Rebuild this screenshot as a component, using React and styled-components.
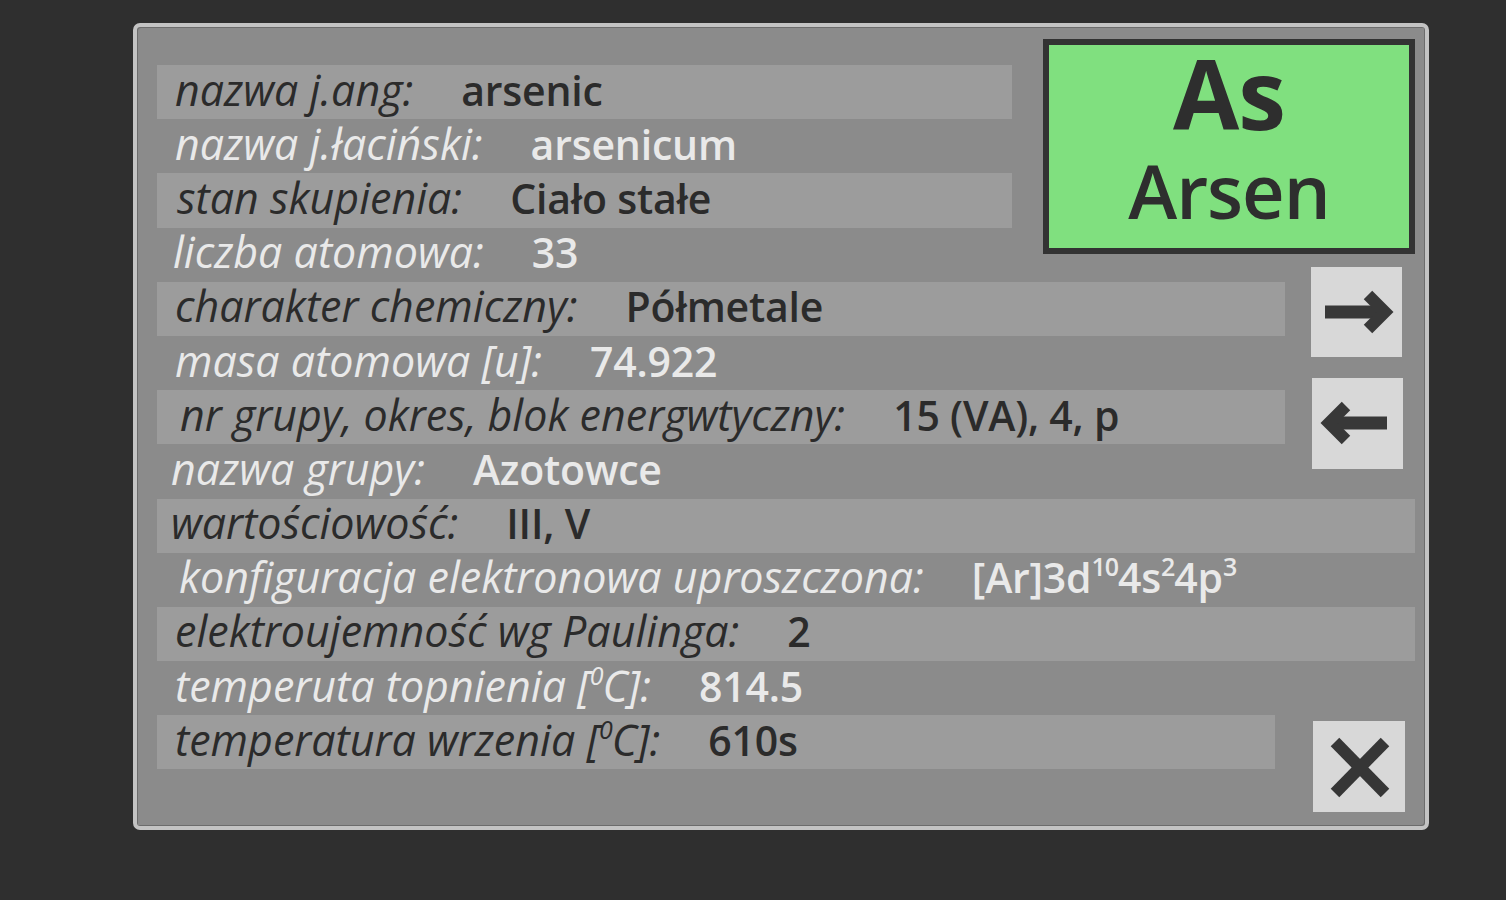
import React from "react";
import styled, { createGlobalStyle } from "styled-components";

const GlobalStyle = createGlobalStyle`
  html, body {
    margin: 0;
    padding: 0;
    background: #2f2f2f;
  }
  body {
    font-family: "Open Sans", "Noto Sans", sans-serif;
  }
`;

const Page = styled.div`
  min-height: 900px;
  padding: 23px 0 0 133px;
  box-sizing: border-box;
`;

const Panel = styled.div`
  box-sizing: border-box;
  width: 1296px;
  border: 4px solid #c3c3c3;
  border-radius: 7px;
  background: #8b8b8b;
  box-shadow: inset 1px 1px 0 #6c6c6c, inset -1px -1px 0 #6c6c6c;
  padding: 12px 10px 14px 20px;
`;

const UpperGrid = styled.div`
  display: grid;
  grid-template-columns: 855px 31px 242px 26px 104px;
  grid-template-rows: 26px repeat(8, 54.2px);
`;

const Row = styled.div`
  box-sizing: border-box;
  display: flex;
  align-items: center;
  gap: 48px;
  height: 54.2px;
  padding-left: ${(p) => 18 + (p.$indent || 0)}px;
  padding-bottom: 5px;
  background: ${(p) => (p.$striped ? "#9c9c9c" : "transparent")};
  color: ${(p) => (p.$striped ? "#2b2b2b" : "#e9e9e9")};
  font-size: 43px;
  line-height: 50px;
  white-space: nowrap;
  grid-column: ${(p) => p.$cols || "auto"};
  width: ${(p) => (p.$width ? p.$width + "px" : "auto")};
`;

const Label = styled.span`
  font-style: italic;
  font-weight: 400;
`;

const Value = styled.span`
  font-weight: 600;
  font-size: 41px;
  letter-spacing: -0.2px;
`;

const Sup = styled.sup`
  font-size: 25px;
  line-height: 0;
  vertical-align: 17px;
  letter-spacing: -1px;
`;

const ElementTile = styled.div`
  grid-column: 3 / 6;
  grid-row: 1 / 6;
  align-self: start;
  box-sizing: border-box;
  height: 215px;
  background: #80e07f;
  border: 6px solid #333333;
  display: flex;
  flex-direction: column;
  align-items: center;
  color: #2e2e2e;
  line-height: 1;
`;

const Symbol = styled.div`
  font-size: 96px;
  font-weight: 700;
  letter-spacing: -1px;
`;

const ElementName = styled.div`
  font-size: 74px;
  font-weight: 600;
  margin-top: 13px;
  letter-spacing: -1px;
`;

const NavStack = styled.div`
  grid-column: 5;
  grid-row: 5 / 10;
  display: flex;
  flex-direction: column;
  gap: 21px;
  padding-top: 39px;
`;

const IconButton = styled.button`
  box-sizing: border-box;
  width: ${(p) => p.$w || 91}px;
  height: ${(p) => p.$h || 90}px;
  margin-left: ${(p) => p.$shift || 0}px;
  border: none;
  padding: 0;
  background: #d8d8d8;
  display: flex;
  align-items: center;
  justify-content: center;
  cursor: pointer;
  svg {
    display: block;
  }
`;

const BottomLine = styled.div`
  display: flex;
  align-items: flex-start;
`;

const CloseSlot = styled.div`
  margin-left: 38px;
  padding-top: 6px;
`;

function ArrowRight() {
  return (
    <svg width="91" height="90" viewBox="0 0 91 90">
      <line x1="14" y1="45" x2="70" y2="45" stroke="#383838" strokeWidth="13" />
      <polyline
        points="57,28 74,45 57,62"
        fill="none"
        stroke="#383838"
        strokeWidth="12"
        strokeLinejoin="miter"
      />
    </svg>
  );
}

function ArrowLeft() {
  return (
    <svg width="91" height="91" viewBox="0 0 91 91">
      <line x1="20" y1="45" x2="75" y2="45" stroke="#383838" strokeWidth="13" />
      <polyline
        points="34,28 17,45 34,62"
        fill="none"
        stroke="#383838"
        strokeWidth="12"
        strokeLinejoin="miter"
      />
    </svg>
  );
}

function CloseIcon() {
  return (
    <svg width="92" height="91" viewBox="0 0 92 91">
      <line x1="22" y1="21" x2="72" y2="72" stroke="#363636" strokeWidth="12" />
      <line x1="72" y1="21" x2="22" y2="72" stroke="#363636" strokeWidth="12" />
    </svg>
  );
}

const upperRows = [
  { label: "nazwa j.ang:", value: "arsenic", striped: true },
  { label: "nazwa j.łaciński:", value: "arsenicum" },
  { label: "stan skupienia:", value: "Ciało stałe", striped: true, indent: 2 },
  { label: "liczba atomowa:", value: "33", indent: -2 },
  { label: "charakter chemiczny:", value: "Półmetale", striped: true, wide: true },
  { label: "masa atomowa [u]:", value: "74.922", wide: true },
  {
    label: "nr grupy, okres, blok energwtyczny:",
    value: "15 (VA), 4, p",
    striped: true,
    wide: true,
    indent: 5,
  },
  { label: "nazwa grupy:", value: "Azotowce", wide: true, indent: -4 },
];

const lowerRows = [
  { label: "wartościowość:", value: "III, V", striped: true, indent: -4 },
  {
    label: "konfiguracja elektronowa uproszczona:",
    value: (
      <>
        [Ar]3d<Sup>10</Sup>4s<Sup>2</Sup>4p<Sup>3</Sup>
      </>
    ),
    indent: 4,
  },
  { label: "elektroujemność wg Paulinga:", value: "2", striped: true },
  {
    label: (
      <>
        temperuta topnienia [<Sup>0</Sup>C]:
      </>
    ),
    value: "814.5",
  },
];

export default function App() {
  return (
    <>
      <GlobalStyle />
      <Page>
        <Panel>
          <UpperGrid>
            {upperRows.map((r, i) => (
              <Row
                key={i}
                $striped={r.striped}
                $indent={r.indent}
                $cols={r.wide ? "1 / 4" : "1 / 2"}
                style={{ gridRow: i + 2 }}
              >
                <Label>{r.label}</Label>
                <Value>{r.value}</Value>
              </Row>
            ))}
            <ElementTile>
              <Symbol>As</Symbol>
              <ElementName>Arsen</ElementName>
            </ElementTile>
            <NavStack>
              <IconButton aria-label="następny">
                <ArrowRight />
              </IconButton>
              <IconButton aria-label="poprzedni" $h={91} $shift={1}>
                <ArrowLeft />
              </IconButton>
            </NavStack>
          </UpperGrid>
          {lowerRows.map((r, i) => (
            <Row key={i} $striped={r.striped} $indent={r.indent}>
              <Label>{r.label}</Label>
              <Value>{r.value}</Value>
            </Row>
          ))}
          <BottomLine>
            <Row $striped $width={1118}>
              <Label>
                temperatura wrzenia [<Sup>0</Sup>C]:
              </Label>
              <Value>610s</Value>
            </Row>
            <CloseSlot>
              <IconButton aria-label="zamknij" $w={92} $h={91}>
                <CloseIcon />
              </IconButton>
            </CloseSlot>
          </BottomLine>
        </Panel>
      </Page>
    </>
  );
}
